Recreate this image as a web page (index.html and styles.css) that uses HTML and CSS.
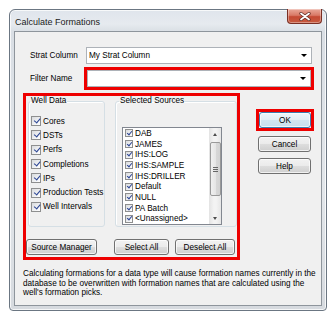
FILE: index.html
```html
<!DOCTYPE html>
<html>
<head>
<meta charset="utf-8">
<link rel="stylesheet" href="styles.css">
</head>
<body>
<div class="window">
  <div class="titlebar">
    <span class="title">Calculate Formations</span>
    <span class="close">
      <svg width="12" height="9" viewBox="0 0 12 9">
        <path d="M2 1.5 L10 7.5 M10 1.5 L2 7.5" stroke="#5a2a22" stroke-width="3.2" stroke-linecap="round"/>
        <path d="M2 1.5 L10 7.5 M10 1.5 L2 7.5" stroke="#ffffff" stroke-width="1.8" stroke-linecap="round"/>
      </svg>
    </span>
  </div>
  <div class="client">
    <div class="field-row">
      <span class="field-label label-strat">Strat Column</span>
      <div class="combo combo-strat"><span class="combo-text">My Strat Column</span><span class="combo-arrow"></span></div>
    </div>
    <div class="field-row row-filter">
      <span class="field-label label-filter">Filter Name</span>
      <div class="hl hl-filter">
        <div class="combo combo-filter"><span class="combo-text"></span><span class="combo-arrow"></span></div>
      </div>
    </div>
    <div class="main">
      <div class="hl hl-main">
        <div class="groups">
          <fieldset class="group group-well">
            <legend>Well Data</legend>
            <div class="check-row"><span class="cb"></span>Cores</div>
            <div class="check-row"><span class="cb"></span>DSTs</div>
            <div class="check-row"><span class="cb"></span>Perfs</div>
            <div class="check-row"><span class="cb"></span>Completions</div>
            <div class="check-row"><span class="cb"></span>IPs</div>
            <div class="check-row"><span class="cb"></span>Production Tests</div>
            <div class="check-row"><span class="cb"></span>Well Intervals</div>
          </fieldset>
          <fieldset class="group group-sources">
            <legend>Selected Sources</legend>
            <div class="listbox">
              <div class="list-items">
                <div class="list-item"><span class="cb cb-small"></span>DAB</div>
                <div class="list-item"><span class="cb cb-small"></span>JAMES</div>
                <div class="list-item"><span class="cb cb-small"></span>IHS:LOG</div>
                <div class="list-item"><span class="cb cb-small"></span>IHS:SAMPLE</div>
                <div class="list-item"><span class="cb cb-small"></span>IHS:DRILLER</div>
                <div class="list-item"><span class="cb cb-small"></span>Default</div>
                <div class="list-item"><span class="cb cb-small"></span>NULL</div>
                <div class="list-item"><span class="cb cb-small"></span>PA Batch</div>
                <div class="list-item"><span class="cb cb-small"></span>&lt;Unassigned&gt;</div>
              </div>
              <div class="scrollbar">
                <span class="sb-btn"><span class="arrow-up"></span></span>
                <span class="sb-thumb"><span class="grip"></span></span>
                <span class="sb-btn sb-down"><span class="arrow-down"></span></span>
              </div>
            </div>
          </fieldset>
        </div>
        <div class="btn-row">
          <button class="btn btn-source">Source Manager</button>
          <button class="btn btn-select">Select All</button>
          <button class="btn btn-deselect">Deselect All</button>
        </div>
      </div>
      <div class="side">
        <div class="hl hl-ok"><button class="btn btn-ok">OK</button></div>
        <button class="btn btn-side btn-cancel">Cancel</button>
        <button class="btn btn-side btn-help">Help</button>
      </div>
    </div>
    <p class="note">Calculating formations for a data type will cause formation names currently in the<br>database to be overwritten with formation names that are calculated using the<br>well's formation picks.</p>
  </div>
</div>
</body>
</html>
```

FILE: styles.css
```css
* { box-sizing: border-box; }

body {
  margin: 0;
  background: #ffffff;
  font-family: "Liberation Sans", Arial, sans-serif;
  font-size: 8.2px;
  color: #000;
}

.window {
  margin: 9px 0 0 9px;
  width: 318px;
  height: 302px;
  border: 1px solid #6b7682;
  border-radius: 6px 6px 4px 4px;
  background: linear-gradient(#dfe5ec 0, #e6eaef 14px, #d9dee4 22px, #e2e6ea 60%, #d6dadf 100%);
  box-shadow: inset 0 0 0 1px rgba(255,255,255,0.75);
  padding: 0 4px 4px 4px;
  display: flex;
  flex-direction: column;
}

.titlebar {
  height: 21px;
  display: flex;
  justify-content: space-between;
  align-items: flex-start;
}

.title {
  font-size: 9px;
  padding: 7px 0 0 1px;
  color: #1a1a1a;
}

.close {
  width: 35px;
  height: 15px;
  margin-top: -1px;
  border: 1px solid #7a2f24;
  border-top: none;
  border-radius: 0 0 4px 4px;
  background: linear-gradient(#e9a899 0%, #d97a66 45%, #c54a33 55%, #c75b40 100%);
  box-shadow: inset 0 0 0 1px rgba(255,255,255,0.35);
  display: flex;
  align-items: center;
  justify-content: center;
}

.client {
  flex: 1;
  background: #f0f0f0;
  border: 1px solid #8e959c;
  padding: 15px 6px 0 8px;
  display: flex;
  flex-direction: column;
}

.field-row {
  display: flex;
  align-items: center;
  margin-left: 7px;
}

.field-label { color: #000; }
.label-strat { width: 56px; }
.label-filter { width: 54px; }

.row-filter { margin-top: 3px; }

.combo {
  height: 17px;
  background: #fff;
  border: 1px solid #adb2b8;
  display: flex;
  align-items: center;
  justify-content: space-between;
  padding: 0 4px 0 2px;
}

.combo-strat { width: 226px; }
.combo-filter { width: 224px; }

.combo-arrow {
  width: 0;
  height: 0;
  border-left: 3px solid transparent;
  border-right: 3px solid transparent;
  border-top: 3px solid #000;
}

.hl { border: 3px solid #ee0000; }

.hl-filter { width: 230px; height: 23px; }

.main {
  display: flex;
  margin-top: 3px;
}

.hl-main {
  width: 217px;
  height: 167px;
  display: flex;
  flex-direction: column;
}

.groups {
  display: flex;
  height: 131px;
}

.group {
  margin: 0;
  height: 131px;
  border: 1px solid #d5dfe5;
  border-radius: 3px;
  box-shadow: inset 1px 1px 0 #fff;
  min-width: 0;
}

.group legend {
  padding: 0 1px;
  line-height: 10px;
  height: 10px;
}

.group-well {
  width: 77px;
  margin-left: 2px;
  padding: 8px 0 0 2px;
}

.group-well legend { margin-left: -1px; }

.group-sources {
  width: 122px;
  margin-left: 10px;
  padding: 21px 0 0 6px;
}

.group-sources legend { margin-left: -3px; }

.check-row {
  height: 14.3px;
  display: flex;
  align-items: center;
  white-space: nowrap;
}

.cb {
  position: relative;
  width: 10px;
  height: 10px;
  flex: none;
  border: 1px solid #8e8f8f;
  background: linear-gradient(135deg, #d8dadd 0%, #f4f5f6 70%, #ffffff 100%);
  margin-right: 2px;
}

.cb::after {
  content: "";
  position: absolute;
  left: 1.5px;
  top: 1px;
  width: 5px;
  height: 2.5px;
  border-left: 1.6px solid #2c4594;
  border-bottom: 1.6px solid #2c4594;
  transform: rotate(-50deg);
}

.cb-small {
  width: 8px;
  height: 8px;
  margin-right: 2px;
}

.cb-small::after {
  left: 1px;
  top: 0.5px;
  width: 4px;
  height: 2px;
}

.listbox {
  width: 100px;
  height: 98px;
  background: #fff;
  border: 1px solid #828790;
  display: flex;
}

.list-items {
  flex: 1;
  padding: 0 0 0 2px;
}

.list-item {
  height: 10.7px;
  display: flex;
  align-items: center;
  white-space: nowrap;
}

.scrollbar {
  width: 12px;
  display: flex;
  flex-direction: column;
  align-items: center;
  background: linear-gradient(90deg, #e3e3e3, #f3f3f3 40%, #f3f3f3 60%, #e6e6e6);
}

.sb-btn {
  width: 12px;
  height: 12px;
  display: flex;
  align-items: center;
  justify-content: center;
}

.sb-down { margin-top: auto; }

.arrow-up {
  width: 0;
  height: 0;
  border-left: 2.5px solid transparent;
  border-right: 2.5px solid transparent;
  border-bottom: 3px solid #4d4d4d;
}

.arrow-down {
  width: 0;
  height: 0;
  border-left: 2.5px solid transparent;
  border-right: 2.5px solid transparent;
  border-top: 3px solid #4d4d4d;
}

.sb-thumb {
  width: 11px;
  height: 54px;
  margin-top: 2px;
  border: 1px solid #999;
  border-radius: 2px;
  background: linear-gradient(90deg, #f0f0f0, #e6e6e6 50%, #d8d8d8 50%, #d2d2d2);
  display: flex;
  align-items: center;
  justify-content: center;
}

.grip {
  width: 5px;
  height: 5px;
  background: repeating-linear-gradient(#666 0, #666 1px, transparent 1px, transparent 2px);
}

.btn-row {
  display: flex;
  margin-top: 12px;
}

.btn {
  height: 16px;
  margin: 0;
  padding: 0;
  font-family: "Liberation Sans", Arial, sans-serif;
  font-size: 8.2px;
  color: #000;
  border: 1px solid #707070;
  border-radius: 3px;
  background: linear-gradient(#f2f2f2 0%, #ebebeb 48%, #dddddd 52%, #cfcfcf 100%);
  box-shadow: inset 0 0 0 1px rgba(255,255,255,0.7);
}

.btn-source { width: 71px; }
.btn-select { width: 55px; margin-left: 17px; }
.btn-deselect { width: 60px; margin-left: 6px; }

.side {
  margin-left: 16px;
  margin-top: 16px;
  display: flex;
  flex-direction: column;
}

.hl-ok { width: 58px; height: 22px; }

.btn-ok {
  width: 52px;
  height: 16px;
  border-color: #3c7fb1;
  background: linear-gradient(#eef6fb 0%, #e2eef6 48%, #d2e5f1 52%, #c8dfee 100%);
}

.btn-side {
  width: 53px;
  margin-left: 2px;
}

.btn-cancel { margin-top: 5px; }
.btn-help { margin-top: 6px; }

.note {
  margin: 9px 0 0 0;
  line-height: 9.7px;
  white-space: nowrap;
}
```
